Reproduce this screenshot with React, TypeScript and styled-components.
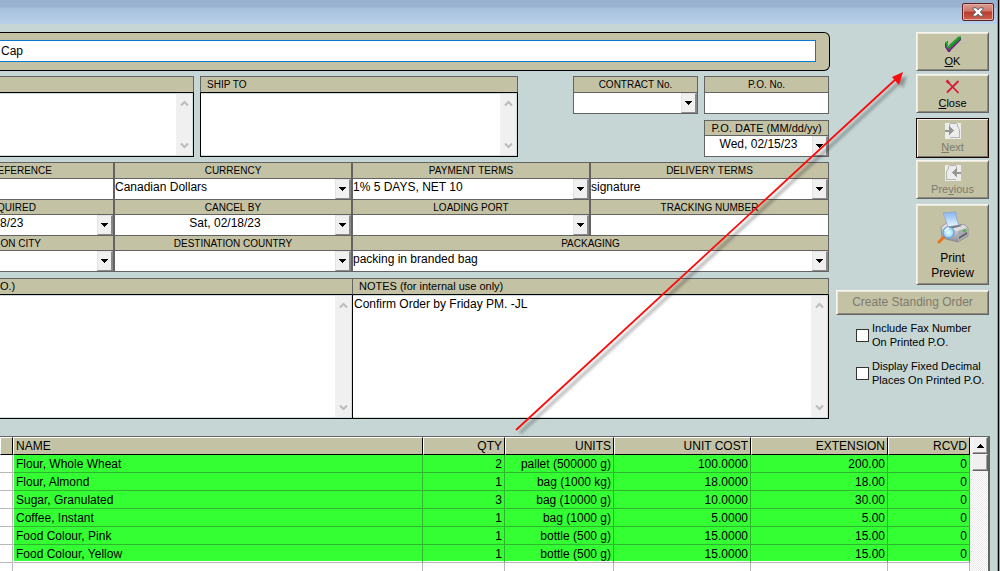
import React from "react";
import styled, { createGlobalStyle, css } from "styled-components";

const color = {
  page: "#c6d6d5",
  khaki: "#c4c2a5",
  line: "#636363",
  green: "#33ff33",
};
const sans = `"Liberation Sans", Arial, sans-serif`;

const GlobalStyle = createGlobalStyle`
  *, *::before, *::after { box-sizing: border-box; }
  body { margin: 0; background: ${color.page}; font-family: ${sans}; font-size: 12px; color: #000; }
  button, input, select, textarea { font: inherit; color: inherit; margin: 0; border-radius: 0; }
`;

const Frame = styled.div`
  position: relative;
  display: flex;
  flex-direction: column;
  min-height: 100vh;
  overflow: hidden;
  border-right: 1px solid #45b4e8;
  margin-right: 2px;
  box-shadow: 1px 0 #000, 2px 0 #8fa3a6;
  background: ${color.page};
`;

const TitleBar = styled.header`
  display: flex;
  justify-content: flex-end;
  height: 24px;
  padding: 3px 3px 0 0;
  background: linear-gradient(#97b1cf 0, #99b3d1 7px, #a6c0dd 8px, #b9d0ea 24px);
`;

const WindowClose = styled.button`
  display: grid;
  place-items: center;
  width: 32px;
  height: 18px;
  padding: 0;
  border: 1px solid #5b2323;
  border-radius: 2px;
  background: linear-gradient(#dd9d92 0, #cf7465 45%, #b83a2b 50%, #cf6250 100%);
  box-shadow: inset 0 0 0 1px #e3aea6;
`;

const Content = styled.div`
  display: flex;
  gap: 6px;
  padding: 8px 8px 0 0;
`;

const Form = styled.main`
  display: flex;
  flex-direction: column;
  flex: 1;
  min-width: 0;
  gap: 5px;
`;

const NameBar = styled.div`
  display: flex;
  padding: 7px 13px 8px 0;
  border: 1px solid #000;
  border-left: 0;
  border-radius: 0 6px 6px 0;
  background: ${color.khaki};
`;

const NameInput = styled.input`
  flex: 1;
  min-width: 0;
  height: 22px;
  padding: 0 1px;
  border: 1px solid #0a78d0;
  border-left: 0;
  background: #fff;
  outline: 0;
`;

const AddressRow = styled.div`
  display: grid;
  grid-template-columns: minmax(0, 194fr) minmax(0, 318fr) 174px 125px;
  gap: 6px;
  padding-right: 1px;
`;

const Stack = styled.div<{ $inset?: boolean }>`
  display: flex;
  flex-direction: column;
  gap: 6px;
  padding-left: ${(p) => (p.$inset ? 49 : 0)}px;
`;

const MemoBox = styled.div`
  display: flex;
  flex-direction: column;
  min-width: 0;
`;

const MemoLabel = styled.label<{ $open?: boolean; $large?: boolean; $joined?: boolean }>`
  height: 17px;
  padding: 0 ${(p) => (p.$open ? 0 : 6)}px;
  border: 1px solid ${color.line};
  border-bottom-color: #000;
  border-left-width: ${(p) => (p.$open ? 0 : 1)}px;
  border-right-width: ${(p) => (p.$joined ? 0 : 1)}px;
  background: ${color.khaki};
  font-size: ${(p) => (p.$large ? 11 : 10)}px;
  line-height: 15px;
  overflow: hidden;
  white-space: nowrap;
`;

const MemoBody = styled.div<{ $height: number; $open?: boolean; $joined?: boolean }>`
  display: flex;
  height: ${(p) => p.$height}px;
  padding: 1px;
  padding-left: 0;
  border: 1px solid #000;
  border-top: 0;
  border-left-width: ${(p) => (p.$open ? 0 : 1)}px;
  border-right-width: ${(p) => (p.$joined ? 0 : 1)}px;
  background: #fff;
  box-shadow: inset 0 1px #cfdcdc, inset -1px -1px #cfdcdc;
`;

const MemoText = styled.textarea`
  flex: 1;
  min-width: 0;
  padding: 1px;
  border: 0;
  outline: 0;
  background: transparent;
  line-height: 14px;
  resize: none;
  overflow: hidden;
`;

const MemoScroll = styled.div`
  display: flex;
  flex-direction: column;
  justify-content: space-between;
  align-items: center;
  width: 16px;
  padding: 6px 0;
  background: #f0f0f0;
`;

const FieldGrid = styled.div`
  display: grid;
  grid-template-columns: minmax(0, 114fr) minmax(0, 238fr) minmax(0, 238fr) minmax(0, 239fr);
  margin-right: 1px;
  border-bottom: 1px solid ${color.line};
`;

const FieldBox = styled.div<{ $wide?: boolean; $first?: boolean; $closed?: boolean }>`
  display: flex;
  flex-direction: column;
  min-width: 0;
  grid-column: ${(p) => (p.$wide ? "span 2" : "auto")};
  border: 1px solid ${color.line};
  border-left-width: ${(p) => (p.$first ? 0 : 1)}px;
  border-bottom-width: ${(p) => (p.$closed ? 1 : 0)}px;
  background: #fff;
`;

const FieldLabel = styled.label<{ $tall?: boolean; $cut?: number; $mixed?: boolean }>`
  display: flex;
  justify-content: ${(p) => (p.$cut ? "flex-end" : "center")};
  height: ${(p) => (p.$tall ? 16 : 15)}px;
  padding-right: ${(p) => p.$cut ?? 0}px;
  border-bottom: 1px solid ${color.line};
  background: ${color.khaki};
  font-size: ${(p) => (p.$mixed ? 11 : 10)}px;
  line-height: 15px;
  white-space: nowrap;
  overflow: hidden;
`;

const ControlRow = styled.div`
  display: grid;
  grid-template-columns: minmax(0, 1fr) auto;
  height: 20px;
`;

const control = css`
  width: 100%;
  height: 20px;
  padding: 0 0 4px;
  border: 0;
  outline: 0;
  background: transparent;
`;

const TextControl = styled.input<{ $center?: boolean }>`
  ${control}
  text-align: ${(p) => (p.$center ? "center" : "left")};
`;

const SelectControl = styled.select`
  ${control}
  appearance: none;
  grid-area: 1 / 1 / 2 / 3;
`;

const arrowFace = css`
  display: grid;
  place-items: center;
  width: 16px;
  height: 20px;
  padding: 0;
  border: 1px solid #e3e3e3;
  border-right: 2px solid #8a8a8a;
  border-bottom: 1px solid #8a8a8a;
  background: #f0f0f0;
`;

const ArrowFace = styled.span`
  ${arrowFace}
  grid-area: 1 / 2;
  pointer-events: none;
`;

const ArrowButton = styled.button`
  ${arrowFace}
`;

const NotesRow = styled.div`
  display: grid;
  grid-template-columns: minmax(0, 352fr) minmax(0, 477fr);
  margin: 1px 1px 0 0;
`;

const Rail = styled.aside`
  display: flex;
  flex-direction: column;
  align-items: flex-end;
  gap: 5px;
  width: 153px;
`;

const ButtonPair = styled.div<{ $gap: number }>`
  display: flex;
  flex-direction: column;
  gap: ${(p) => p.$gap}px;
`;

const PushButton = styled.button<{ $size?: "large" | "bar"; $framed?: boolean }>`
  display: flex;
  flex-direction: column;
  align-items: center;
  justify-content: ${(p) => (p.$size === "bar" ? "center" : "flex-start")};
  gap: ${(p) => (p.$size === "large" ? 6 : 1)}px;
  width: ${(p) => (p.$size === "bar" ? "100%" : "73px")};
  height: ${(p) => (p.$size === "large" ? 81 : p.$size === "bar" ? 25 : p.$framed ? 40 : 39)}px;
  padding: ${(p) => (p.$size === "large" ? "6px 0 0" : p.$size === "bar" ? "0" : "3px 0 0")};
  border: 1px solid;
  border-color: ${(p) => (p.$framed ? "#1a0508" : `#f6f6f0 ${color.line} ${color.line} #f6f6f0`)};
  background: ${color.khaki};
  box-shadow: ${(p) =>
    p.$framed
      ? "inset 1px 1px #f2f2ea, inset -1px -1px #77766a"
      : "inset 1px 1px #e9e8da, inset -1px -1px #8b8a7c"};
  font-size: ${(p) => (p.$size ? 12 : 11)}px;
  line-height: 15px;
  color: #000;
  &:disabled { color: #7c7b6d; }
`;

const CheckLabel = styled.label`
  display: flex;
  align-items: center;
  gap: 3px;
  align-self: stretch;
  padding-left: 20px;
  font-size: 11px;
  line-height: 14px;
  white-space: nowrap;
`;

const CheckGroup = styled.div`
  display: flex;
  flex-direction: column;
  gap: 10px;
  align-self: stretch;
  margin-top: 1px;
`;

const CheckBox = styled.input`
  appearance: none;
  flex: none;
  width: 13px;
  height: 13px;
  border: 1px solid #333;
  background: #fff;
`;

const ItemsPanel = styled.section`
  display: flex;
  flex: 1;
  margin: 17px 7px 0 0;
  border-top: 1px solid ${color.line};
  border-right: 1px solid ${color.line};
  background: #fff;
`;

const ItemsTable = styled.table`
  flex: 1;
  min-width: 0;
  align-self: flex-start;
  table-layout: fixed;
  border-spacing: 0;
  line-height: 16px;
`;

const Col = styled.col<{ $w?: number }>`
  width: ${(p) => (p.$w ? `${p.$w}px` : "auto")};
`;

const Th = styled.th<{ $left?: boolean }>`
  height: 18px;
  padding: 0 2px;
  border: 1px solid #000;
  border-top-color: #fff;
  border-left-color: #fff;
  background: ${color.khaki};
  font-weight: 400;
  text-align: ${(p) => (p.$left ? "left" : "right")};
  white-space: nowrap;
`;

const Td = styled.td<{ $left?: boolean; $filled?: boolean }>`
  height: 18px;
  padding: 0 2px;
  border-right: 1px solid ${(p) => (p.$filled ? "#2fb52f" : "#b9b9b9")};
  border-bottom: 1px solid ${(p) => (p.$filled ? "#2fb52f" : "#b9b9b9")};
  background: ${(p) => (p.$filled ? color.green : "#fff")};
  text-align: ${(p) => (p.$left ? "left" : "right")};
  white-space: nowrap;
  overflow: hidden;
  ${(p) => p.$left && css`border-left: 1px solid #fff;`}
  tr:nth-last-child(2) > & {
    border-bottom-color: #b9b9b9;
    box-shadow: inset 0 -1px #fff;
  }
`;

const BlankTd = styled.td`
  height: 8px;
  padding: 0;
  border-right: 1px solid #b9b9b9;
`;

const ListScroll = styled.div`
  display: flex;
  flex-direction: column;
  width: 19px;
  padding: 0 1px 0 2px;
  border-right: 1px solid ${color.line};
  background: conic-gradient(#e9e9e9 25%, #fff 0 50%, #e9e9e9 0 75%, #fff 0) 0 0 / 2px 2px;
`;

const ScrollKnob = styled.button`
  display: grid;
  place-items: center;
  width: 16px;
  height: 17px;
  padding: 0;
  border: 1px solid #f6f6f6;
  border-right-color: ${color.line};
  border-bottom-color: ${color.line};
  background: #f0f0f0;
  box-shadow: inset -1px -1px #a0a0a0;
`;

const Pointer = styled.svg`
  position: absolute;
  top: 64px;
  right: 87px;
  pointer-events: none;
`;

const DownTriangle = () => (
  <svg width="7" height="4" viewBox="0 0 7 4" shapeRendering="crispEdges" aria-hidden="true">
    <path d="M0 0h7v1H6v1H5v1H4v1H3V3H2V2H1V1H0z" />
  </svg>
);

const UpTriangle = () => (
  <svg width="7" height="4" viewBox="0 0 7 4" shapeRendering="crispEdges" aria-hidden="true">
    <path d="M3 0h1v1h1v1h1v1h1v1H0V3h1V2h1V1h1z" />
  </svg>
);

const Chevron = ({ down }: { down?: boolean }) => (
  <svg width="9" height="7" viewBox="0 0 9 7" aria-hidden="true">
    <path d={down ? "M1 1.5l3.5 3.5L8 1.5" : "M1 5.5L4.5 2 8 5.5"} fill="none" stroke="#bcbcbc" strokeWidth="2" />
  </svg>
);

const CrossGlyph = () => (
  <svg width="12" height="10" viewBox="0 0 12 10" aria-hidden="true">
    <path d="M1 .8h3.2L6 2.900 7.800.8H11v1.400L8.300 5 11 7.800v1.400H7.800L6 7.100 4.200 9.200H1V7.800L3.700 5 1 2.200z" fill="#fff" stroke="#53606c" />
  </svg>
);

const CheckIcon = () => (
  <svg width="18" height="17" viewBox="0 0 18 17" aria-hidden="true">
    <path d="M1 7h1l2 1v3L15 1.500h2V4L7 14l-1 2H4l-3-5z" fill="#7a1a86" />
    <path d="M1 6l3-1v5L14.500.5H17v2L6.500 12.500 5 14 2.500 11z" fill="#1f8c2e" />
    <path d="M1.500 6.500H3.500V11h1.500L15.500 1" fill="none" stroke="#35d040" strokeDasharray="1.500 1" />
    <path d="M4 12.500h1.500L16.500 2.500" fill="none" stroke="#4d5f50" strokeDasharray="1 1" />
  </svg>
);

const RedCross = () => (
  <svg width="16" height="17" viewBox="0 0 16 17" aria-hidden="true">
    <path d="M2.500 3.500L13.500 15M13.500 3L2 14.500" fill="none" stroke="#d9163c" strokeWidth="1.800" />
    <path d="M1.500 2.500l2.500 2.500" stroke="#d9163c" strokeWidth="2.500" />
  </svg>
);

const PageIcon = ({ back }: { back?: boolean }) => (
  <svg width="16" height="17" viewBox="0 0 16 17" shapeRendering="crispEdges" aria-hidden="true">
    <rect y="1" width="16" height="16" fill="#ececea" />
    <g transform={back ? "matrix(-1 0 0 1 16 0)" : undefined}>
      <path d="M5 1h7v1H5zM12 2h1v3h-1zM13 5h1v2h-1zM14 7h1v9h-1zM5 15h9v1H5zM4 2h1v2H4z" fill="#b4b4b0" />
      <path d="M0 8h4V4h1v1h1v1h1v1h1v1h1v1H8v1H7v1H6v1H5v1H4v-3H0z" fill="#969692" />
    </g>
  </svg>
);

const PrinterIcon = () => (
  <svg width="32" height="34" viewBox="0 0 32 34" aria-hidden="true">
    <defs>
      <linearGradient id="sheet" x1="0" y1="0" x2="0" y2="1">
        <stop offset="0" stopColor="#85b6f2" />
        <stop offset="1" stopColor="#eef6ff" />
      </linearGradient>
      <linearGradient id="shell" x1="0" y1="0" x2="0" y2="1">
        <stop offset="0" stopColor="#f1f1f3" />
        <stop offset="1" stopColor="#8d8d95" />
      </linearGradient>
      <radialGradient id="lens">
        <stop offset="0" stopColor="#f4fdff" />
        <stop offset="1" stopColor="#8ad0f5" />
      </radialGradient>
    </defs>
    <path d="M4 16l6-4 18 2 3 3v8l-10 6-16-4z" fill="url(#shell)" stroke="#85858d" strokeWidth=".800" />
    <path d="M5 16l6-4 18 3-8 5z" fill="#dedee2" />
    <path d="M6 2c4 0 8-1 13-1 0 5 1 9 3 13l-11 2C9 11 8 6 6 2z" fill="url(#sheet)" stroke="#8aa4cc" strokeWidth=".800" />
    <path d="M11 16l12-2 2 1-12 3z" fill="#77777f" />
    <path d="M21 20v11l9-6v-8z" fill="#a9a9b1" />
    <path d="M22 26l8-5v2l-8 5z" fill="#5d5d65" />
    <path d="M26 20.500l3-1.500" stroke="#35c23b" strokeWidth="2" />
    <path d="M7 26l-5 5" stroke="#e8741d" strokeWidth="3" strokeLinecap="round" />
    <circle cx="11.500" cy="21.500" r="5.500" fill="url(#lens)" stroke="#6ba2de" strokeWidth="1.300" />
    <path d="M8 20c1-2 2-3 4-3" fill="none" stroke="#fff" strokeWidth="1.500" />
  </svg>
);

type MemoProps = {
  id: string;
  label: string;
  height: number;
  value?: string;
  open?: boolean;
  joined?: boolean;
  large?: boolean;
};

function Memo({ id, label, height, value, open, joined, large }: MemoProps) {
  return (
    <MemoBox>
      <MemoLabel htmlFor={id} $open={open} $joined={joined} $large={large}>{label}</MemoLabel>
      <MemoBody $height={height} $open={open} $joined={joined}>
        <MemoText id={id} defaultValue={value} />
        <MemoScroll aria-hidden="true">
          <Chevron />
          <Chevron down />
        </MemoScroll>
      </MemoBody>
    </MemoBox>
  );
}

type FieldProps = {
  id: string;
  label: string;
  kind: "text" | "select" | "date";
  value?: string;
  tall?: boolean;
  cut?: number;
  first?: boolean;
  wide?: boolean;
  closed?: boolean;
  mixed?: boolean;
};

function Field({ id, label, kind, value = "", tall, cut, first, wide, closed, mixed }: FieldProps) {
  return (
    <FieldBox $first={first} $wide={wide} $closed={closed}>
      <FieldLabel htmlFor={id} $tall={tall} $cut={cut} $mixed={mixed}>{label}</FieldLabel>
      <ControlRow>
        {kind === "select" ? (
          <>
            <SelectControl id={id} defaultValue={value}>
              <option value={value}>{value}</option>
            </SelectControl>
            <ArrowFace><DownTriangle /></ArrowFace>
          </>
        ) : (
          <TextControl id={id} defaultValue={value} $center={kind === "date" && !first} />
        )}
        {kind === "date" && (
          <ArrowButton type="button" aria-label="Open calendar"><DownTriangle /></ArrowButton>
        )}
      </ControlRow>
    </FieldBox>
  );
}

const fields: FieldProps[] = [
  { id: "reference", label: "REFERENCE", kind: "text", tall: true, cut: 61, first: true },
  { id: "currency", label: "CURRENCY", kind: "select", value: "Canadian Dollars", tall: true },
  { id: "payment", label: "PAYMENT TERMS", kind: "select", value: "1% 5 DAYS, NET 10", tall: true },
  { id: "delivery", label: "DELIVERY TERMS", kind: "select", value: "signature", tall: true },
  { id: "required", label: "QUIRED", kind: "date", value: "8/23", cut: 77, first: true },
  { id: "cancel", label: "CANCEL BY", kind: "date", value: "Sat, 02/18/23" },
  { id: "port", label: "LOADING PORT", kind: "select" },
  { id: "tracking", label: "TRACKING NUMBER", kind: "text" },
  { id: "city", label: "ON CITY", kind: "select", cut: 72, first: true },
  { id: "country", label: "DESTINATION COUNTRY", kind: "select" },
  { id: "packaging", label: "PACKAGING", kind: "select", value: "packing in branded bag", wide: true },
];

const items = [
  ["Flour, Whole Wheat", "2", "pallet (500000 g)", "100.0000", "200.00", "0"],
  ["Flour, Almond", "1", "bag (1000 kg)", "18.0000", "18.00", "0"],
  ["Sugar, Granulated", "3", "bag (10000 g)", "10.0000", "30.00", "0"],
  ["Coffee, Instant", "1", "bag (1000 g)", "5.0000", "5.00", "0"],
  ["Food Colour, Pink", "1", "bottle (500 g)", "15.0000", "15.00", "0"],
  ["Food Colour, Yellow", "1", "bottle (500 g)", "15.0000", "15.00", "0"],
];

const headings = ["NAME", "QTY", "UNITS", "UNIT COST", "EXTENSION", "RCVD"];

export default function App() {
  return (
    <>
      <GlobalStyle />
      <Frame>
        <TitleBar>
          <WindowClose type="button" aria-label="Close window"><CrossGlyph /></WindowClose>
        </TitleBar>
        <Content>
          <Form>
            <NameBar>
              <NameInput aria-label="Supplier" defaultValue="Cap" />
            </NameBar>
            <AddressRow>
              <Memo id="address" label="" height={64} open />
              <Memo id="shipto" label="SHIP TO" height={64} />
              <Stack $inset>
                <Field id="contract" label="CONTRACT No." kind="select" tall closed />
              </Stack>
              <Stack>
                <Field id="pono" label="P.O. No." kind="text" tall closed />
                <Field id="podate" label="P.O. DATE (MM/dd/yy)" kind="date" value="Wed, 02/15/23" closed mixed />
              </Stack>
            </AddressRow>
            <FieldGrid>
              {fields.map((f) => <Field key={f.id} {...f} />)}
            </FieldGrid>
            <NotesRow>
              <Memo id="ponotes" label="O.)" height={124} open joined large />
              <Memo
                id="notes"
                label="NOTES (for internal use only)"
                height={124}
                value="Confirm Order by Friday PM. -JL"
                large
              />
            </NotesRow>
          </Form>
          <Rail>
            <ButtonPair $gap={3}>
              <PushButton type="button"><CheckIcon /><span><u>O</u>K</span></PushButton>
              <PushButton type="button"><RedCross /><span><u>C</u>lose</span></PushButton>
            </ButtonPair>
            <ButtonPair $gap={2}>
              <PushButton type="button" disabled $framed><PageIcon /><span><u>N</u>ext</span></PushButton>
              <PushButton type="button" disabled><PageIcon back /><span>Pre<u>v</u>ious</span></PushButton>
            </ButtonPair>
            <PushButton type="button" $size="large">
              <PrinterIcon />
              <span>Print<br />Preview</span>
            </PushButton>
            <PushButton type="button" disabled $size="bar">Create Standing Order</PushButton>
            <CheckGroup>
              <CheckLabel>
                <CheckBox type="checkbox" />
                <span>Include Fax Number<br />On Printed P.O.</span>
              </CheckLabel>
              <CheckLabel>
                <CheckBox type="checkbox" />
                <span>Display Fixed Decimal<br />Places On Printed P.O.</span>
              </CheckLabel>
            </CheckGroup>
          </Rail>
        </Content>
        <ItemsPanel>
          <ItemsTable>
            <colgroup>
              <Col $w={13} />
              <Col />
              <Col $w={82} />
              <Col $w={109} />
              <Col $w={137} />
              <Col $w={137} />
              <Col $w={82} />
            </colgroup>
            <thead>
              <tr>
                <Th aria-hidden="true" />
                {headings.map((h, i) => <Th key={h} scope="col" $left={i === 0}>{h}</Th>)}
              </tr>
            </thead>
            <tbody>
              {items.map((row) => (
                <tr key={row[0]}>
                  <Td />
                  {row.map((cell, i) => <Td key={i} $filled $left={i === 0}>{cell}</Td>)}
                </tr>
              ))}
              <tr>
                {Array.from({ length: 7 }, (_, i) => <BlankTd key={i} />)}
              </tr>
            </tbody>
          </ItemsTable>
          <ListScroll>
            <ScrollKnob type="button" aria-label="Scroll up"><UpTriangle /></ScrollKnob>
            <ScrollKnob type="button" aria-label="Scroll position" />
          </ListScroll>
        </ItemsPanel>
        <Pointer width="400" height="372" viewBox="510 64 400 372" aria-hidden="true">
          <defs>
            <filter id="soft" x="-5%" y="-5%" width="110%" height="110%">
              <feGaussianBlur stdDeviation="1.500" />
            </filter>
          </defs>
          <g filter="url(#soft)" opacity=".300">
            <path d="M520 433L900 82" stroke="#000" strokeWidth="3" />
            <path d="M907 76l-11 4 7 8z" />
          </g>
          <path d="M516 430L897 78" stroke="#fb0d0d" strokeWidth="1.800" />
          <path d="M903 72l-11 5 7 8z" fill="#fb0d0d" />
        </Pointer>
      </Frame>
    </>
  );
}
